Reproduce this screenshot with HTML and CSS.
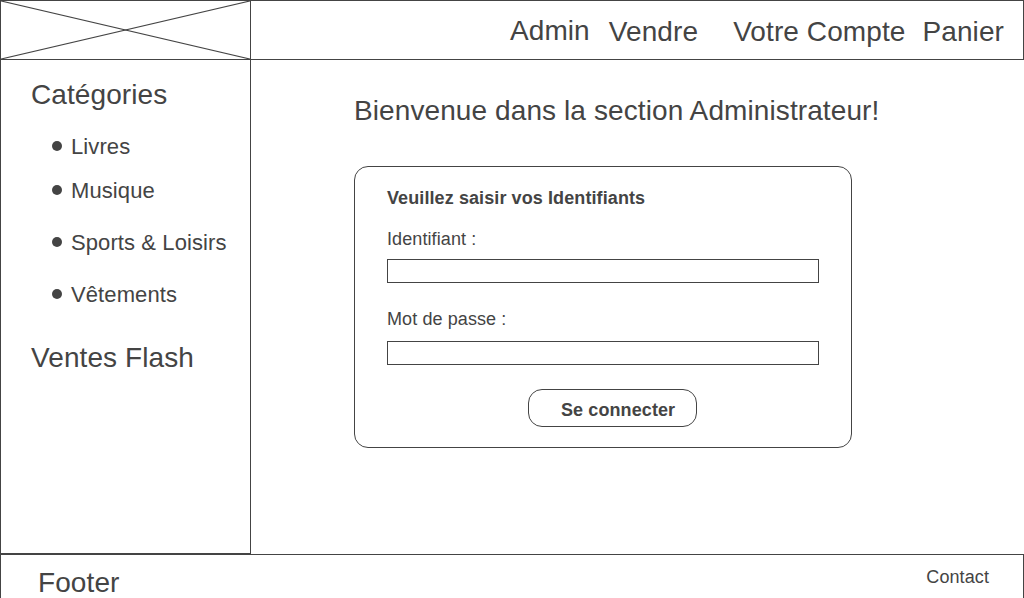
FILE: index.html
```html
<!DOCTYPE html>
<html lang="fr">
<head>
<meta charset="utf-8">
<title>Administrateur</title>
<link rel="stylesheet" href="styles.css">
</head>
<body>
<div class="page">
  <header class="header">
    <div class="logo">
      <svg class="logo-x" viewBox="0 0 249 58" preserveAspectRatio="none">
        <line x1="0" y1="0" x2="249" y2="58" />
        <line x1="0" y1="58" x2="249" y2="0" />
      </svg>
    </div>
    <nav class="nav">
      <a class="nav-item nav-admin">Admin</a>
      <a class="nav-item nav-vendre">Vendre</a>
      <a class="nav-item nav-compte">Votre Compte</a>
      <a class="nav-item nav-panier">Panier</a>
    </nav>
  </header>
  <div class="body-row">
    <aside class="sidebar">
      <h2 class="side-title">Catégories</h2>
      <ul class="cat-list">
        <li class="cat cat-1">Livres</li>
        <li class="cat cat-2">Musique</li>
        <li class="cat cat-3">Sports &amp; Loisirs</li>
        <li class="cat cat-4">Vêtements</li>
      </ul>
      <h2 class="side-title flash">Ventes Flash</h2>
    </aside>
    <main class="main">
      <h1 class="welcome">Bienvenue dans la section Administrateur!</h1>
      <form class="card">
        <div class="card-title">Veuillez saisir vos Identifiants</div>
        <label class="label label-id">Identifiant :</label>
        <div class="input"></div>
        <label class="label label-pw">Mot de passe :</label>
        <div class="input input-pw"></div>
        <div class="btn">Se connecter</div>
      </form>
    </main>
  </div>
  <footer class="footer">
    <span class="footer-title">Footer</span>
    <span class="footer-link">Contact</span>
  </footer>
</div>
</body>
</html>
```
FILE: styles.css
```css
* { box-sizing: border-box; }
html, body { margin: 0; padding: 0; background: #fff; }
body {
  font-family: "Liberation Sans", Arial, sans-serif;
  color: #444;
  letter-spacing: 0.006em;
  width: 1024px;
  height: 598px;
  overflow: hidden;
}
.page {
  display: flex;
  flex-direction: column;
  width: 1024px;
  height: 598px;
  overflow: hidden;
}

/* Header */
.header {
  display: flex;
  height: 60px;
  flex: none;
  border: 1px solid #444;
}
.logo {
  width: 250px;
  flex: none;
  border-right: 1px solid #444;
  display: flex;
}
.logo-x {
  width: 249px;
  height: 58px;
  display: block;
}
.logo-x line {
  stroke: #444;
  stroke-width: 1.2;
  vector-effect: non-scaling-stroke;
}
.nav {
  margin-left: auto;
  display: flex;
  align-items: center;
  padding-right: 19px;
  padding-top: 4px;
}
.nav-item {
  font-size: 28px;
  line-height: 32px;
  color: #444;
  text-decoration: none;
}
.nav-admin { margin-bottom: 2px; }
.nav-vendre { margin-left: 19px; }
.nav-compte { margin-left: 35px; }
.nav-panier { margin-left: 17px; }

/* Body row */
.body-row {
  display: flex;
  height: 494px;
  flex: none;
}
.sidebar {
  width: 251px;
  flex: none;
  border-left: 1px solid #444;
  border-right: 1px solid #444;
  border-bottom: 1px solid #444;
  padding: 19px 0 0 30px;
}
.side-title {
  margin: 0;
  font-size: 28px;
  line-height: 32px;
  font-weight: normal;
}
.cat-list {
  list-style: none;
  margin: 23px 0 0 0;
  padding: 0 0 0 21px;
}
.cat {
  font-size: 22px;
  line-height: 26px;
}
.cat::before {
  content: "";
  display: inline-block;
  width: 10px;
  height: 10px;
  border-radius: 50%;
  background: #444;
  vertical-align: middle;
  margin-right: 9px;
  position: relative;
  top: -2px;
}
.cat-2 { margin-top: 18px; }
.cat-3 { margin-top: 26px; }
.cat-4 { margin-top: 26px; }
.flash { margin-top: 34px; }

/* Main */
.main {
  flex: 1;
  padding: 35px 0 0 103px;
}
.welcome {
  margin: 0;
  font-size: 28px;
  line-height: 32px;
  font-weight: normal;
}
.card {
  margin: 39px 0 0 0;
  width: 498px;
  border: 1px solid #444;
  border-radius: 14px;
  padding: 20px 32px 20px 32px;
  display: flex;
  flex-direction: column;
  align-items: flex-start;
}
.card-title {
  font-size: 18px;
  line-height: 22px;
  font-weight: bold;
}
.label {
  font-size: 18px;
  line-height: 22px;
}
.label-id { margin-top: 19px; }
.label-pw { margin-top: 25px; }
.input {
  margin-top: 9px;
  width: 432px;
  height: 24px;
  border: 1px solid #444;
  background: #fff;
}
.input-pw { margin-top: 11px; }
.btn {
  margin: 24px 0 0 141px;
  width: 169px;
  height: 38px;
  border: 1px solid #444;
  border-radius: 14px;
  padding: 3px 0 0 32px;
  display: flex;
  align-items: center;
  font-size: 18px;
  line-height: 22px;
  font-weight: bold;
}

/* Footer */
.footer {
  flex: none;
  height: 60px;
  border: 1px solid #444;
  display: flex;
  justify-content: space-between;
  align-items: flex-start;
  padding: 0 34px 0 37px;
}
.footer-title {
  margin-top: 12px;
  font-size: 28px;
  line-height: 32px;
}
.footer-link {
  margin-top: 11px;
  font-size: 18px;
  line-height: 22px;
}
```
